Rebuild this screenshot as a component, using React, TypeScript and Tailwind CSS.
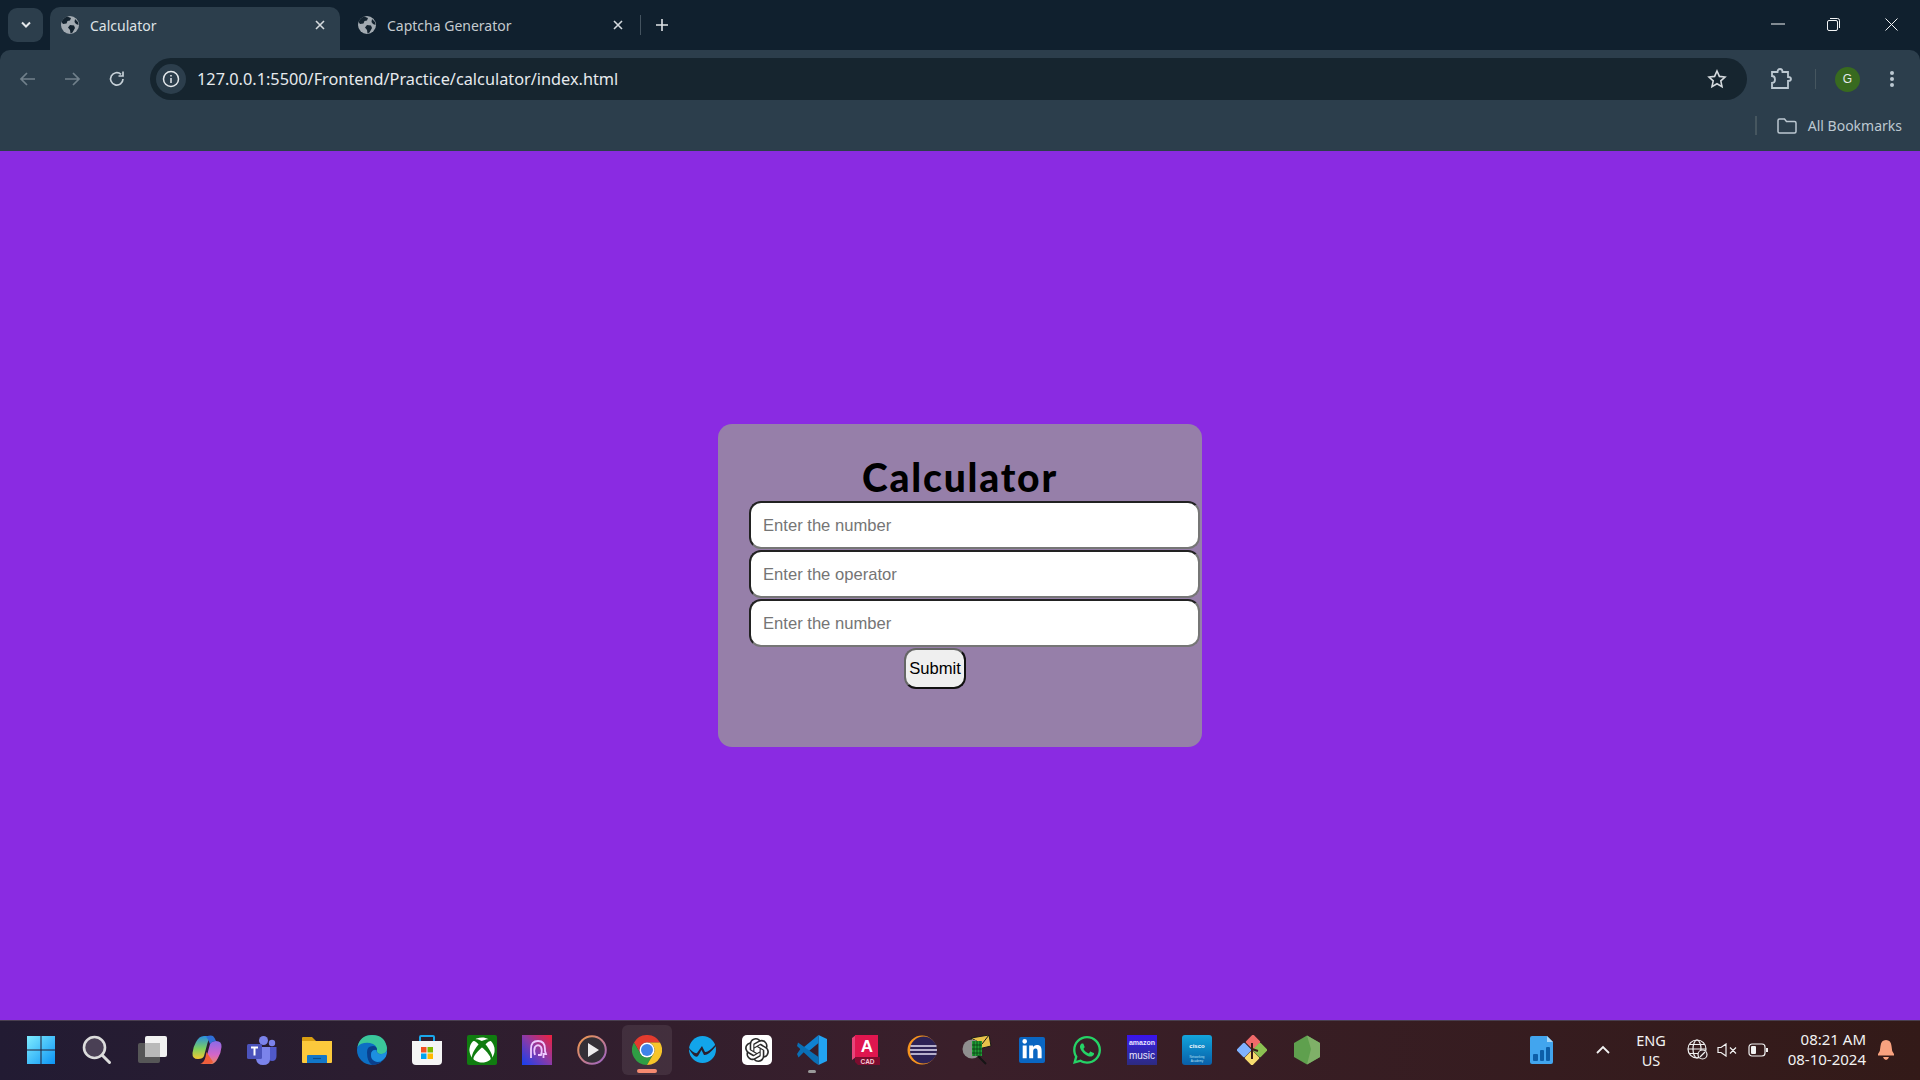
import { FaWhatsapp, FaLinkedinIn, FaXbox } from "react-icons/fa";
import { SiOpenai } from "react-icons/si";

const Globe = () => (
    <svg width="20" height="20" viewBox="0 0 20 20">
        <circle cx="10" cy="10" r="9" fill="#a3abb2" />
        <path d="M7 1.5 L11 3 L10 5.5 L7.5 6 L6.5 8.5 L3 9 L1.5 7 Q3 3 7 1.5 Z M10 10 L14 10.5 L15 13 L12.5 17.5 L10.5 18.5 L10 15 L8 12.5 Z M15 4 L18 7 L18.5 10 L16 9 L14.5 7 Z" fill="#14232f" />
    </svg>
);

const CloseX = ({ color = "#d5dade" }: { color?: string }) => (
    <svg width="10" height="10" viewBox="0 0 10 10" stroke={color} strokeWidth="1.6" fill="none">
        <path d="M1 1 L9 9 M9 1 L1 9" />
    </svg>
);

const Tile = ({ children }: { children: React.ReactNode }) => (
    <div className="w-[30px] h-[30px] shrink-0 flex items-center justify-center">{children}</div>
);

const Svg = ({ children }: { children: React.ReactNode }) => (
    <svg width="30" height="30" viewBox="0 0 30 30">{children}</svg>
);

function WindowsIcon() {
    return (
        <Svg>
            <defs>
                <linearGradient id="win" x1="0" y1="0" x2="1" y2="1">
                    <stop offset="0" stopColor="#7fecff" />
                    <stop offset="1" stopColor="#0c94f5" />
                </linearGradient>
            </defs>
            <path d="M0 1 H13.5 V14.5 H0 Z M14.5 1 H28 V14.5 H14.5 Z M0 15.5 H13.5 V29 H0 Z M14.5 15.5 H28 V29 H14.5 Z" fill="url(#win)" />
        </Svg>
    );
}

function SearchIcon() {
    return (
        <Svg>
            <circle cx="12.5" cy="12.5" r="10.5" fill="#4a4055" stroke="#dcdcdc" strokeWidth="2.6" />
            <path d="M20 20 L27.5 27.5" stroke="#dcdcdc" strokeWidth="3" strokeLinecap="round" />
        </Svg>
    );
}

function TaskViewIcon() {
    return (
        <Svg>
            <rect x="8" y="1" width="22" height="21" rx="2" fill="#f2f2f2" />
            <rect x="1" y="8" width="22" height="20" rx="2" fill="#5a5a5a" fillOpacity="0.93" />
            <rect x="8" y="8" width="15" height="14" fill="#b9b9b9" />
        </Svg>
    );
}

function CopilotIcon() {
    return (
        <Svg>
            <defs>
                <linearGradient id="copA" x1="0" y1="0" x2="0" y2="1">
                    <stop offset="0" stopColor="#2a8fe0" />
                    <stop offset="0.55" stopColor="#7ccf5f" />
                    <stop offset="1" stopColor="#f5c832" />
                </linearGradient>
                <linearGradient id="copB" x1="0" y1="0" x2="0" y2="1">
                    <stop offset="0" stopColor="#8a6be8" />
                    <stop offset="0.6" stopColor="#d465c8" />
                    <stop offset="1" stopColor="#f08a5c" />
                </linearGradient>
            </defs>
            <path d="M12 1 H21 Q17 2 15.5 8 L12 21 Q11 24 6 24 Q0 24 0.5 18 Q1 12 4 7 Q7 1 12 1 Z" fill="url(#copA)" />
            <path d="M19 29 H9 Q13 28 14.5 22 L18 9 Q19 6 24 6 Q30 6 29.5 12 Q29 18 26 23 Q23 29 19 29 Z" fill="url(#copB)" />
            <path d="M8 28.5 Q12 28 13.5 22 L14.5 17 L21 27 Q20 29 16 29 Z" fill="#ef5d3b" />
            <path d="M14 1.5 Q19 0 21 1 Q23 3 24 6 Q20 6 18 9 Q16 4 14 1.5 Z" fill="#2f6fd8" />
        </Svg>
    );
}

function TeamsIcon() {
    return (
        <Svg>
            <circle cx="25" cy="8" r="3.2" fill="#7b83eb" />
            <circle cx="16.5" cy="5.5" r="4.5" fill="#7b83eb" />
            <path d="M21 12 H29.5 V21 Q29.5 26 25 26 Q22 26 21 24 Z" fill="#5059c9" />
            <path d="M9 12 H23 V24 Q23 30 16 30 Q10 30 9 24 Z" fill="#7b83eb" />
            <rect x="0" y="9" width="15" height="15" rx="1.5" fill="#4b53bc" />
            <path d="M4 12.5 H11 M7.5 12.5 V20.5" stroke="#fff" strokeWidth="2" />
        </Svg>
    );
}

function FolderIcon() {
    return (
        <Svg>
            <path d="M0 3 Q0 2 1 2 H10 L14 6 H30 V12 H0 Z" fill="#d99e12" />
            <path d="M0 6 H30 V27 Q30 28 29 28 H1 Q0 28 0 27 Z" fill="#fcc93c" />
            <path d="M5 28 V21 Q5 20 6 20 H24 Q25 20 25 21 V28 Z" fill="#1277c9" />
            <path d="M11 23.5 H19" stroke="#0b4f8c" strokeWidth="1.2" />
        </Svg>
    );
}

function EdgeIcon() {
    return (
        <Svg>
            <circle cx="15" cy="15" r="15" fill="#0d6fc4" />
            <path d="M0.5 12 Q3 0 15 0 Q28 0 30 13 Q30 19 24 19 Q20 19 20 16 Q20 9 13 8 Q4 7 0.5 12 Z" fill="#3bc79a" />
            <path d="M10 17 Q10 11 16 11 Q20 11 20 15 Q14 14 14 20 Q14 26 21 27 Q26 28 28 23 Q24 30 15 30 Q10 27 10 17 Z" fill="#0a3f8c" />
            <path d="M14 20 Q14 15 19 15 Q20 20 25 19 Q28 19 30 16 Q30 21 27 24 Q20 30 15 24 Q14 22 14 20 Z" fill="#1d8fe0" />
        </Svg>
    );
}

function StoreIcon() {
    return (
        <Svg>
            <path d="M8 6 V2 Q8 1 9 1 H21 Q22 1 22 2 V6" fill="none" stroke="#1aa7ec" strokeWidth="2" />
            <path d="M0 6 H30 V26 Q30 30 26 30 H4 Q0 30 0 26 Z" fill="#f5f5f5" />
            <rect x="9" y="12" width="5.5" height="5.5" fill="#f25022" />
            <rect x="15.5" y="12" width="5.5" height="5.5" fill="#7fba00" />
            <rect x="9" y="18.5" width="5.5" height="5.5" fill="#00a4ef" />
            <rect x="15.5" y="18.5" width="5.5" height="5.5" fill="#ffb900" />
        </Svg>
    );
}

function XboxIcon() {
    return (
        <div className="w-[30px] h-[30px] rounded-[2px] bg-[#107c10] flex items-center justify-center">
            <FaXbox size={26} color="#ffffff" />
        </div>
    );
}

function PurpleIcon() {
    return (
        <Svg>
            <defs>
                <linearGradient id="prp" x1="0" y1="1" x2="1" y2="0">
                    <stop offset="0" stopColor="#1440f0" />
                    <stop offset="0.5" stopColor="#8a3aa8" />
                    <stop offset="1" stopColor="#f0203c" />
                </linearGradient>
            </defs>
            <rect width="30" height="30" fill="url(#prp)" />
            <path d="M9 23 V14 Q9 6 16 6 Q23 6 23 14 V16 L24 19 H21.5 V23 M13 20 Q11.5 15 13 12 Q16 8.5 19 12 Q20.5 15 19 20 H16" fill="none" stroke="#eec9ff" strokeWidth="1.8" />
        </Svg>
    );
}

function PlayIcon() {
    return (
        <Svg>
            <defs>
                <linearGradient id="ply" x1="0" y1="0" x2="1" y2="1">
                    <stop offset="0" stopColor="#f29a4a" />
                    <stop offset="1" stopColor="#9a62c8" />
                </linearGradient>
            </defs>
            <circle cx="15" cy="15" r="13.8" fill="#333036" stroke="url(#ply)" strokeWidth="2" />
            <path d="M11 8 L22 15 L11 22 Z" fill="#ececec" />
        </Svg>
    );
}

function ChromeIcon() {
    return (
        <Svg>
            <path d="M2 7.5 A15 15 0 0 1 28 7.5 L15 7.5 A7.5 7.5 0 0 0 8.5 18.75 Z" fill="#e33b2e" />
            <path d="M2 7.5 A15 15 0 0 0 15 30 L21.5 18.75 A7.5 7.5 0 0 1 8.5 18.75 Z" fill="#2f9e44" />
            <path d="M28 7.5 A15 15 0 0 1 15 30 L21.5 18.75 A7.5 7.5 0 0 0 15 7.5 Z" fill="#f7c52a" />
            <circle cx="15" cy="15" r="7.5" fill="#ffffff" />
            <circle cx="15" cy="15" r="6" fill="#3f83ea" />
        </Svg>
    );
}

function WaveIcon() {
    return (
        <Svg>
            <circle cx="15.5" cy="14.5" r="13.5" fill="#12a5ea" />
            <path d="M2 14 Q8 24 11 21 L14.5 15 L17 20 Q21 21 29 11 L29 9 Q21 18 18 17 L15 11 L10 18 Q7 19 2 13 Z" fill="#2a1f2e" />
        </Svg>
    );
}

function ChatGptIcon() {
    return (
        <div className="w-[30px] h-[30px] rounded-[5px] bg-white flex items-center justify-center">
            <SiOpenai size={24} color="#2b2b2b" />
        </div>
    );
}

function VsCodeIcon() {
    return (
        <Svg>
            <path d="M21.5 0 L30 4 V26 L21.5 30 Z" fill="#22a3f2" />
            <path d="M21.5 0 V8 L9 18.5 L4 14.5 Z" fill="#0f82d2" />
            <path d="M21.5 30 V22 L1 7.5 L0 11 L17 27 Z" fill="#0a6fb5" />
            <path d="M0 19 L1.5 22.5 L9 15 L5 11.5 Z" fill="#0a6fb5" />
        </Svg>
    );
}

function AutoCadIcon() {
    return (
        <Svg>
            <path d="M0 3 L4 0 H26 V22 H4 L0 25 Z" fill="#e8447a" />
            <path d="M3 0 H26 V22 H3 Z" fill="#e0164f" />
            <path d="M3 22 H28 V30 H6 L3 27 Z" fill="#7d0c2e" />
            <text x="15" y="17" textAnchor="middle" fontFamily="Liberation Sans" fontSize="17" fontWeight="700" fill="#fff">A</text>
            <text x="15.5" y="28.5" textAnchor="middle" fontFamily="Liberation Sans" fontSize="6.5" fontWeight="700" fill="#f6c9d6">CAD</text>
        </Svg>
    );
}

function EclipseIcon() {
    return (
        <Svg>
            <circle cx="15" cy="15" r="14.5" fill="#f7941e" />
            <circle cx="16.5" cy="15" r="13.5" fill="#2c2255" />
            <path d="M3.5 11 H29.5 M3 15 H30 M3.5 19 H29.5" stroke="#e3e0f2" strokeWidth="1.7" />
        </Svg>
    );
}

function MailScanIcon() {
    return (
        <Svg>
            <path d="M9 3 L27 0 L29 11 L12 15 Z" fill="#e8c24a" stroke="#1a1a1a" strokeWidth="1" />
            <path d="M9 3 L20 9 L27 0" fill="none" stroke="#1a1a1a" strokeWidth="1" />
            <circle cx="10" cy="14" r="9.5" fill="#8f8f8f" />
            <rect x="10" y="6" width="10" height="15" fill="#1f9e35" />
            <path d="M12 6 V21 M15 6 V21 M18 6 V21 M10 10 H20 M10 14 H20 M10 18 H20" stroke="#0b3b14" strokeWidth="0.8" />
            <path d="M16 21 L24 29" stroke="#151515" strokeWidth="2" />
        </Svg>
    );
}

function LinkedInIcon() {
    return (
        <div className="w-[26px] h-[26px] rounded-[2px] bg-[#0a66c2] flex items-center justify-center">
            <FaLinkedinIn size={22} color="#ffffff" />
        </div>
    );
}

function AmazonIcon() {
    return (
        <div className="w-[30px] h-[30px] bg-gradient-to-b from-[#3a10f0] to-[#2d2a80] flex flex-col items-center justify-center text-[#e8e4ff] font-['Liberation_Sans'] leading-[10px]">
            <span className="text-[7px] font-bold">amazon</span>
            <span className="text-[10px] mt-[3px]">music</span>
        </div>
    );
}

function CiscoIcon() {
    return (
        <div className="w-[30px] h-[30px] rounded-[3px] bg-gradient-to-b from-[#14a5dc] to-[#0a5fa8] flex flex-col items-center text-white font-['Liberation_Sans']">
            <span className="text-[6px] font-bold leading-[6px] mt-[8px]">cisco</span>
            <span className="text-[3px] leading-[4px] mt-[6px] text-[#b8e0f4]">Networking</span>
            <span className="text-[3px] leading-[4px] text-[#b8e0f4]">Academy</span>
        </div>
    );
}

function GitIcon() {
    return (
        <Svg>
            <rect x="10.5" y="1.5" width="11" height="11" rx="1.5" transform="rotate(45 16 7)" fill="#f06a6a" />
            <rect x="1.5" y="9.5" width="11" height="11" rx="1.5" transform="rotate(45 7 15)" fill="#7fb2ff" />
            <rect x="17.5" y="9.5" width="11" height="11" rx="1.5" transform="rotate(45 23 15)" fill="#8cc152" />
            <rect x="9.5" y="17.5" width="11" height="11" rx="1.5" transform="rotate(45 15 23)" fill="#f7dc6f" />
            <path d="M15 8 V24 M15 14 L21 16" stroke="#3a1a18" strokeWidth="2" />
        </Svg>
    );
}

function NodeIcon() {
    return (
        <Svg>
            <path d="M15 0.5 L28 8 V22 L15 29.5 L2 22 V8 Z" fill="#5fa04e" />
            <path d="M15 0.5 L28 8 V22 L15 29.5 L19 14 Z" fill="#7fb068" />
        </Svg>
    );
}

function TrayFileIcon() {
    return (
        <svg width="23" height="28" viewBox="0 0 23 28">
            <path d="M2 0 H17 L23 6 V26 Q23 28 21 28 H2 Q0 28 0 26 V2 Q0 0 2 0 Z" fill="#42a5ee" />
            <path d="M17 0 L23 6 H17 Z" fill="#a5d8fa" />
            <rect x="3" y="18" width="5" height="7" rx="1" fill="#0d5ea8" />
            <rect x="10" y="14" width="4" height="11" rx="1" fill="#0d5ea8" />
            <rect x="16" y="11" width="4" height="14" rx="1" fill="#0d5ea8" />
        </svg>
    );
}

export default function App() {
    const sans = "font-['Noto_Sans','Open_Sans',sans-serif]";

    return (
        <div className="h-screen flex flex-col overflow-hidden bg-[#8a2be2]">

            {/* Tab strip */}
            <div className={`h-[50px] shrink-0 bg-[#10202e] flex items-end relative ${sans}`}>
                <div className="w-[35px] h-[34px] ml-[8px] mb-[8px] rounded-[9px] bg-[#2c3e4c] flex items-center justify-center">
                    <svg width="12" height="8" viewBox="0 0 12 8" fill="none" stroke="#e4e8eb" strokeWidth="2">
                        <path d="M2 1.5 L6 5.5 L10 1.5" />
                    </svg>
                </div>
                <div className="w-[290px] h-[43px] ml-[7px] rounded-t-[10px] bg-[#2c3e4c] flex items-center pl-[10px] pr-[15px] pb-[7px]">
                    <Globe />
                    <span className="ml-[10px] text-[14px] text-[#dfe3e6]">Calculator</span>
                    <span className="ml-auto"><CloseX /></span>
                </div>
                <div className="w-[290px] h-[43px] flex items-center pl-[17px] pr-[7px] pb-[7px]">
                    <Globe />
                    <span className="ml-[10px] text-[14px] text-[#c4cacf]">Captcha Generator</span>
                    <span className="ml-auto"><CloseX /></span>
                </div>
                <div className="w-px h-[20px] mb-[15px] ml-[10px] bg-[#44535f]" />
                <svg className="ml-[14px] mb-[18px]" width="14" height="14" viewBox="0 0 14 14" stroke="#dfe3e6" strokeWidth="1.6">
                    <path d="M7 1 V13 M1 7 H13" />
                </svg>

                {/* Window controls */}
                <div className="ml-auto self-start h-[48px] flex items-center text-[#f2f4f5]">
                    <svg className="mr-[42px]" width="14" height="2" viewBox="0 0 14 2">
                        <path d="M0 1 H14" stroke="#f2f4f5" strokeWidth="1" />
                    </svg>
                    <svg className="mr-[45px]" width="13" height="13" viewBox="0 0 13 13" fill="none" stroke="#f2f4f5" strokeWidth="1">
                        <rect x="0.5" y="2.5" width="10" height="10" rx="1.5" />
                        <path d="M3 0.5 H10.5 Q12.5 0.5 12.5 2.5 V10" />
                    </svg>
                    <svg className="mr-[22px]" width="13" height="13" viewBox="0 0 13 13" stroke="#f2f4f5" strokeWidth="1">
                        <path d="M0.5 0.5 L12.5 12.5 M12.5 0.5 L0.5 12.5" />
                    </svg>
                </div>
            </div>

            {/* Toolbar */}
            <div className="shrink-0 bg-[#10202e]">
                <div className={`h-[58px] rounded-t-[10px] bg-[#2c3e4c] flex items-start pt-[8px] ${sans}`}>
                    <div className="w-[150px] h-[42px] shrink-0 flex items-center pl-[19px]">
                        <svg width="18" height="16" viewBox="0 0 18 16" fill="none" stroke="#71808b" strokeWidth="1.7">
                            <path d="M16 8 H2 M8 2 L2 8 L8 14" />
                        </svg>
                        <svg className="ml-[26px]" width="18" height="16" viewBox="0 0 18 16" fill="none" stroke="#71808b" strokeWidth="1.7">
                            <path d="M2 8 H16 M10 2 L16 8 L10 14" />
                        </svg>
                        <svg className="ml-[27px]" width="18" height="18" viewBox="0 0 18 18" fill="none" stroke="#c6d0d7" strokeWidth="1.7">
                            <path d="M15 9 A6.2 6.2 0 1 1 13 4.3" />
                            <path d="M15 1.5 V6 H10.5" />
                        </svg>
                    </div>
                    <div className="w-[1597px] h-[42px] rounded-full bg-[#16252f] flex items-center pl-[6px]">
                        <div className="w-[30px] h-[30px] rounded-full bg-[#2c3e4c] flex items-center justify-center">
                            <svg width="18" height="18" viewBox="0 0 18 18" fill="none" stroke="#e4e8eb" strokeWidth="1.5">
                                <circle cx="9" cy="9" r="7.5" />
                                <path d="M9 8 V13 M9 5 V6.5" />
                            </svg>
                        </div>
                        <span className="ml-[11px] text-[16.3px] text-[#e6eaed]">127.0.0.1:5500/Frontend/Practice/calculator/index.html</span>
                        <svg className="ml-auto mr-[20px]" width="20" height="20" viewBox="0 0 20 20" fill="none" stroke="#d5dade" strokeWidth="1.6">
                            <path d="M10 2 L12.4 7.4 L18 8 L13.8 11.9 L15 17.6 L10 14.7 L5 17.6 L6.2 11.9 L2 8 L7.6 7.4 Z" />
                        </svg>
                    </div>
                    <div className="h-[42px] flex items-center">
                        <svg className="ml-[23px]" width="22" height="22" viewBox="0 0 22 22" fill="none" stroke="#bcc8d1" strokeWidth="1.8">
                            <path d="M2 4 H7.5 Q7.5 1 10 1 Q12.5 1 12.5 4 H18 V9 Q21 9 21 11 Q21 13 18 13 V20 H2 V15 Q5 15 5 11.5 Q5 8 2 8 Z" />
                        </svg>
                        <div className="w-px h-[20px] ml-[23px] bg-[#46565f]" />
                        <div className="w-[25px] h-[25px] ml-[19px] rounded-full bg-[#386a1f] flex items-center justify-center text-[12px] text-[#e6eaed] font-['Liberation_Sans']">G</div>
                        <svg className="ml-[29px]" width="6" height="18" viewBox="0 0 6 18" fill="#bcc8d1">
                            <circle cx="3" cy="3" r="2" />
                            <circle cx="3" cy="9" r="2" />
                            <circle cx="3" cy="15" r="2" />
                        </svg>
                    </div>
                </div>
            </div>

            {/* Bookmarks bar */}
            <div className={`h-[43px] shrink-0 bg-[#2c3e4c] flex items-center justify-end pr-[18px] pb-[8px] ${sans}`}>
                <div className="w-[2px] h-[19px] mr-[20px] bg-[#46565f]" />
                <svg className="mr-[11px]" width="20" height="16" viewBox="0 0 20 16" fill="none" stroke="#bcc8d1" strokeWidth="1.5">
                    <path d="M1 2.5 Q1 1 2.5 1 H7.5 L9.5 3.5 H17.5 Q19 3.5 19 5 V13.5 Q19 15 17.5 15 H2.5 Q1 15 1 13.5 Z" />
                </svg>
                <span className="text-[14px] text-[#bcc8d1]">All Bookmarks</span>
            </div>

            {/* Page */}
            <div className="flex-1 flex items-center justify-center">
                <div className="w-[484px] h-[323px] rounded-[14px] bg-[#967fa9] pt-[30px] font-['Liberation_Sans',sans-serif]">
                    <h1 className="text-center text-[39px] leading-[46px] tracking-[1.8px] font-black text-black font-['Lato',sans-serif]">Calculator</h1>
                    <div className="flex flex-col gap-px pl-[31px] pt-px">
                        <input placeholder="Enter the number" className="w-[451px] h-[48px] rounded-[12px] bg-white border-2 border-t-[#222222] border-l-[#222222] border-r-[#767676] border-b-[#767676] pl-[12px] pt-[2px] text-[16.6px] outline-none placeholder:text-[#757575]" />
                        <input placeholder="Enter the operator" className="w-[451px] h-[48px] rounded-[12px] bg-white border-2 border-t-[#222222] border-l-[#222222] border-r-[#767676] border-b-[#767676] pl-[12px] pt-[2px] text-[16.6px] outline-none placeholder:text-[#757575]" />
                        <input placeholder="Enter the number" className="w-[451px] h-[48px] rounded-[12px] bg-white border-2 border-t-[#222222] border-l-[#222222] border-r-[#767676] border-b-[#767676] pl-[12px] pt-[2px] text-[16.6px] outline-none placeholder:text-[#757575]" />
                        <button className="w-[62px] h-[41px] ml-[155px] rounded-[12px] bg-[#efefef] border-2 border-t-[#666666] border-l-[#666666] border-r-[#111111] border-b-[#111111] pt-px text-[16.6px] text-black">Submit</button>
                    </div>
                </div>
            </div>

            {/* Taskbar */}
            <div className="h-[60px] shrink-0 border-t border-[#4a3f50] bg-gradient-to-r from-[#221b33] via-[#3a1f2a] to-[#331a18] flex items-center pl-[27px] pb-[2px] font-['Noto_Sans',sans-serif] text-[#f2f2f2]">
                <div className="flex items-center gap-[25px]">
                    <Tile><WindowsIcon /></Tile>
                    <Tile><SearchIcon /></Tile>
                    <Tile><TaskViewIcon /></Tile>
                    <Tile><CopilotIcon /></Tile>
                    <Tile><TeamsIcon /></Tile>
                    <Tile><FolderIcon /></Tile>
                    <Tile><EdgeIcon /></Tile>
                    <Tile><StoreIcon /></Tile>
                    <Tile><XboxIcon /></Tile>
                    <Tile><PurpleIcon /></Tile>
                    <Tile><PlayIcon /></Tile>
                    <div className="relative w-[30px] h-[30px] shrink-0">
                        <div className="absolute -left-[10px] -top-[10px] w-[50px] h-[50px] rounded-[6px] bg-white/8" />
                        <div className="absolute left-[5px] top-[34px] w-[20px] h-[4px] rounded-full bg-[#f58a70]" />
                        <div className="relative"><ChromeIcon /></div>
                    </div>
                    <Tile><WaveIcon /></Tile>
                    <Tile><ChatGptIcon /></Tile>
                    <div className="relative w-[30px] h-[30px] shrink-0">
                        <VsCodeIcon />
                        <div className="absolute left-[11px] top-[35px] w-[8px] h-[3px] rounded-full bg-[#9a9a9a]" />
                    </div>
                    <Tile><AutoCadIcon /></Tile>
                    <Tile><EclipseIcon /></Tile>
                    <Tile><MailScanIcon /></Tile>
                    <Tile><LinkedInIcon /></Tile>
                    <Tile><FaWhatsapp size={32} color="#25d366" /></Tile>
                    <Tile><AmazonIcon /></Tile>
                    <Tile><CiscoIcon /></Tile>
                    <Tile><GitIcon /></Tile>
                    <Tile><NodeIcon /></Tile>
                </div>

                {/* Tray */}
                <div className="ml-auto flex items-center">
                    <TrayFileIcon />
                    <svg className="ml-[43px]" width="14" height="9" viewBox="0 0 14 9" fill="none" stroke="#f2f2f2" strokeWidth="1.8">
                        <path d="M1 8 L7 2 L13 8" />
                    </svg>
                    <div className="w-[40px] ml-[21px] text-center text-[14.5px] leading-[20px]">
                        <div>ENG</div>
                        <div>US</div>
                    </div>
                    <svg className="ml-[16px]" width="21" height="21" viewBox="0 0 21 21" fill="none" stroke="#f2f2f2" strokeWidth="1.2">
                        <circle cx="10" cy="10" r="9" />
                        <ellipse cx="10" cy="10" rx="4" ry="9" />
                        <path d="M1 10 H19 M2.5 5.5 H17.5 M2.5 14.5 H11" />
                        <circle cx="15.5" cy="15.5" r="4.5" fill="#2f1c20" />
                        <path d="M13 18 L18 13" />
                    </svg>
                    <svg className="ml-[9px]" width="20" height="14" viewBox="0 0 20 14" fill="none" stroke="#f2f2f2" strokeWidth="1.2">
                        <path d="M1 4.5 H4 L9 1 V13 L4 9.5 H1 Z M13 4.5 L19 10.5 M19 4.5 L13 10.5" />
                    </svg>
                    <svg className="ml-[11px]" width="21" height="14" viewBox="0 0 21 14" fill="none" stroke="#f2f2f2" strokeWidth="1.2">
                        <rect x="1" y="1" width="16" height="12" rx="3" />
                        <rect x="3" y="3" width="5" height="8" rx="1" fill="#f2f2f2" stroke="none" />
                        <path d="M19 5 V9" strokeWidth="2" />
                    </svg>
                    <div className="w-[97px] mb-[2px] text-right text-[15px] leading-[20px]">
                        <div>08:21 AM</div>
                        <div>08-10-2024</div>
                    </div>
                    <svg className="ml-[12px] mr-[26px]" width="16" height="20" viewBox="0 0 16 20" fill="#f9a27f">
                        <path d="M8 0 Q13 0 13.5 6 Q13.5 11 16 14 V15.5 H0 V14 Q2.5 11 2.5 6 Q3 0 8 0 Z" />
                        <path d="M5 17 H11 Q10 20 8 20 Q6 20 5 17 Z" />
                    </svg>
                </div>
            </div>
        </div>
    );
}
